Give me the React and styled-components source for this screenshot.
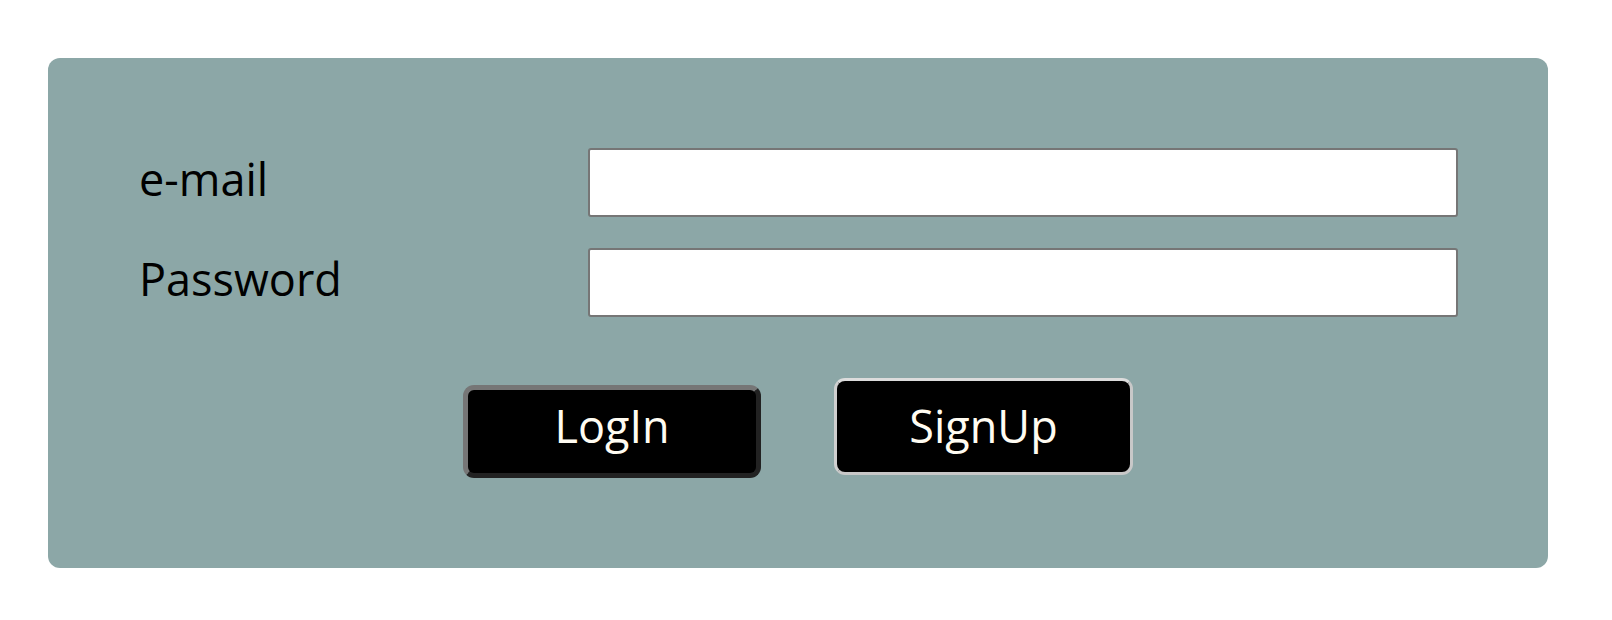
import styled, { createGlobalStyle } from "styled-components";

const GlobalStyle = createGlobalStyle`
  html, body {
    margin: 0;
    padding: 0;
    background: #ffffff;
    font-family: "Open Sans", "Noto Sans", sans-serif;
  }
`;

const App = () => {
  return (
    <>
      <GlobalStyle />
      <Page>
        <LoginCard>
          <Fields>
            <Label htmlFor="email">e-mail</Label>
            <TextInput id="email" type="text" />
            <Label htmlFor="password">Password</Label>
            <TextInput id="password" type="password" />
          </Fields>
          <Actions>
            <ActionButton $variant="login">LogIn</ActionButton>
            <ActionButton $variant="signup">SignUp</ActionButton>
          </Actions>
        </LoginCard>
      </Page>
    </>
  );
};

export default App;

const Page = styled.main`
  padding: 58px 0 0 48px;
`;

const LoginCard = styled.form`
  width: 1500px;
  box-sizing: border-box;
  padding: 90px 90px 90px;
  background-color: #8ca7a7;
  border-radius: 12px;
`;

const Fields = styled.div`
  display: grid;
  grid-template-columns: 450px 1fr;
  grid-auto-rows: 69px;
  row-gap: 31px;
  align-items: center;
`;

const Label = styled.label`
  font-size: 45px;
  line-height: 1;
  color: #000;
  padding-left: 1px;
  padding-bottom: 8px;
`;

const TextInput = styled.input`
  box-sizing: border-box;
  width: 100%;
  height: 69px;
  border: 2px solid #767676;
  border-radius: 3px;
  background: #fff;
  font-family: inherit;
  font-size: 24px;
  padding: 0 10px;
  outline: none;
`;

const Actions = styled.div`
  margin-top: 61px;
  display: flex;
  justify-content: center;
  align-items: baseline;
  gap: 73px;
`;

const ActionButton = styled.button`
  box-sizing: border-box;
  background: #000;
  color: #fffcf2;
  font-family: inherit;
  font-size: 45px;
  line-height: 60px;
  text-align: center;
  cursor: pointer;
  border-radius: 11px;
  ${({ $variant }) =>
    $variant === "login"
      ? `
    width: 298px;
    height: 93px;
    border: 5px solid;
    border-color: #767676 #222 #222 #767676;
    padding: 6px 0 17px;
  `
      : `
    width: 299px;
    height: 97px;
    border: 3px solid;
    border-color: #dcdcdc #c8c8c8 #c8c8c8 #cfcfcf;
    padding: 15px 0 16px;
  `}
`;
